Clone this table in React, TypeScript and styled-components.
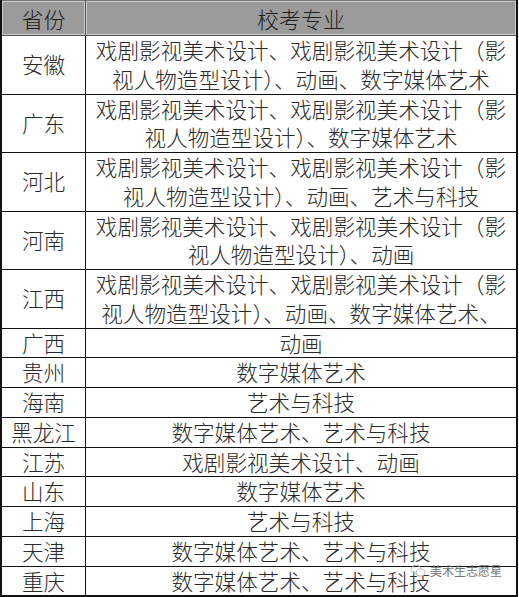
import React from "react";
import styled, { createGlobalStyle } from "styled-components";

const Global = createGlobalStyle`
  html, body { margin: 0; padding: 0; background: #fff; }
  body { width: 519px; height: 597px; overflow: hidden; }
`;

const Wrap = styled.div`
  position: relative;
  width: 519px;
  height: 597px;
  background: #fff;
  font-family: "Noto Sans CJK SC", "Noto Sans", sans-serif;
  color: #2a2a2a;
`;

const Table = styled.table`
  width: 518px;
  border-collapse: collapse;
  table-layout: fixed;
  border-left: 2px solid #111;
  border-right: 2px solid #111;
  border-bottom: 2px solid #111;
`;

const HeadCell = styled.th<{ $w?: number }>`
  width: ${(p) => (p.$w ? `${p.$w}px` : "auto")};
  height: 34px;
  padding: 0;
  background: #9b9b9b;
  box-shadow: inset 0 0 0 1px #c9c9c9;
  border: 1px solid #555;
  border-top: 1px solid #777;
  font-weight: 300;
  font-size: 22px;
  line-height: 34px;
  color: #1e1e1e;
  text-align: center;
`;

const Cell = styled.td<{ $pad?: number }>`
  border: 1px solid #111;
  padding: 0 ${(p) => p.$pad ?? 0}px;
  font-size: 21.6px;
  line-height: 28.75px;
  text-align: center;
  font-weight: 300;
  word-break: break-all;
`;

const Watermark = styled.div`
  position: absolute;
  left: 410px;
  top: 564px;
  display: flex;
  align-items: center;
  gap: 4px;
  font-size: 12px;
  line-height: 14px;
  color: #777;
  font-family: "Noto Sans CJK SC", sans-serif;
`;

const rows: [string, string][] = [
  ["安徽", "戏剧影视美术设计、戏剧影视美术设计（影视人物造型设计）、动画、数字媒体艺术"],
  ["广东", "戏剧影视美术设计、戏剧影视美术设计（影视人物造型设计）、数字媒体艺术"],
  ["河北", "戏剧影视美术设计、戏剧影视美术设计（影视人物造型设计）、动画、艺术与科技"],
  ["河南", "戏剧影视美术设计、戏剧影视美术设计（影视人物造型设计）、动画"],
  ["江西", "戏剧影视美术设计、戏剧影视美术设计（影视人物造型设计）、动画、数字媒体艺术、"],
  ["广西", "动画"],
  ["贵州", "数字媒体艺术"],
  ["海南", "艺术与科技"],
  ["黑龙江", "数字媒体艺术、艺术与科技"],
  ["江苏", "戏剧影视美术设计、动画"],
  ["山东", "数字媒体艺术"],
  ["上海", "艺术与科技"],
  ["天津", "数字媒体艺术、艺术与科技"],
  ["重庆", "数字媒体艺术、艺术与科技"],
];

export default function App() {
  return (
    <Wrap>
      <Global />
      <Table>
        <thead>
          <tr>
            <HeadCell $w={83}>省份</HeadCell>
            <HeadCell>校考专业</HeadCell>
          </tr>
        </thead>
        <tbody>
          {rows.map(([p, m]) => (
            <tr key={p}>
              <Cell>{p}</Cell>
              <Cell $pad={3}>{m}</Cell>
            </tr>
          ))}
        </tbody>
      </Table>
      <Watermark>
        <svg width="16" height="14" viewBox="0 0 16 14" fill="none" stroke="#bbb" strokeWidth="1">
          <ellipse cx="6" cy="5.5" rx="5" ry="4.2" />
          <ellipse cx="10.5" cy="8.5" rx="4.3" ry="3.6" fill="#fff" />
        </svg>
        <span>美术生志愿星</span>
      </Watermark>
    </Wrap>
  );
}
